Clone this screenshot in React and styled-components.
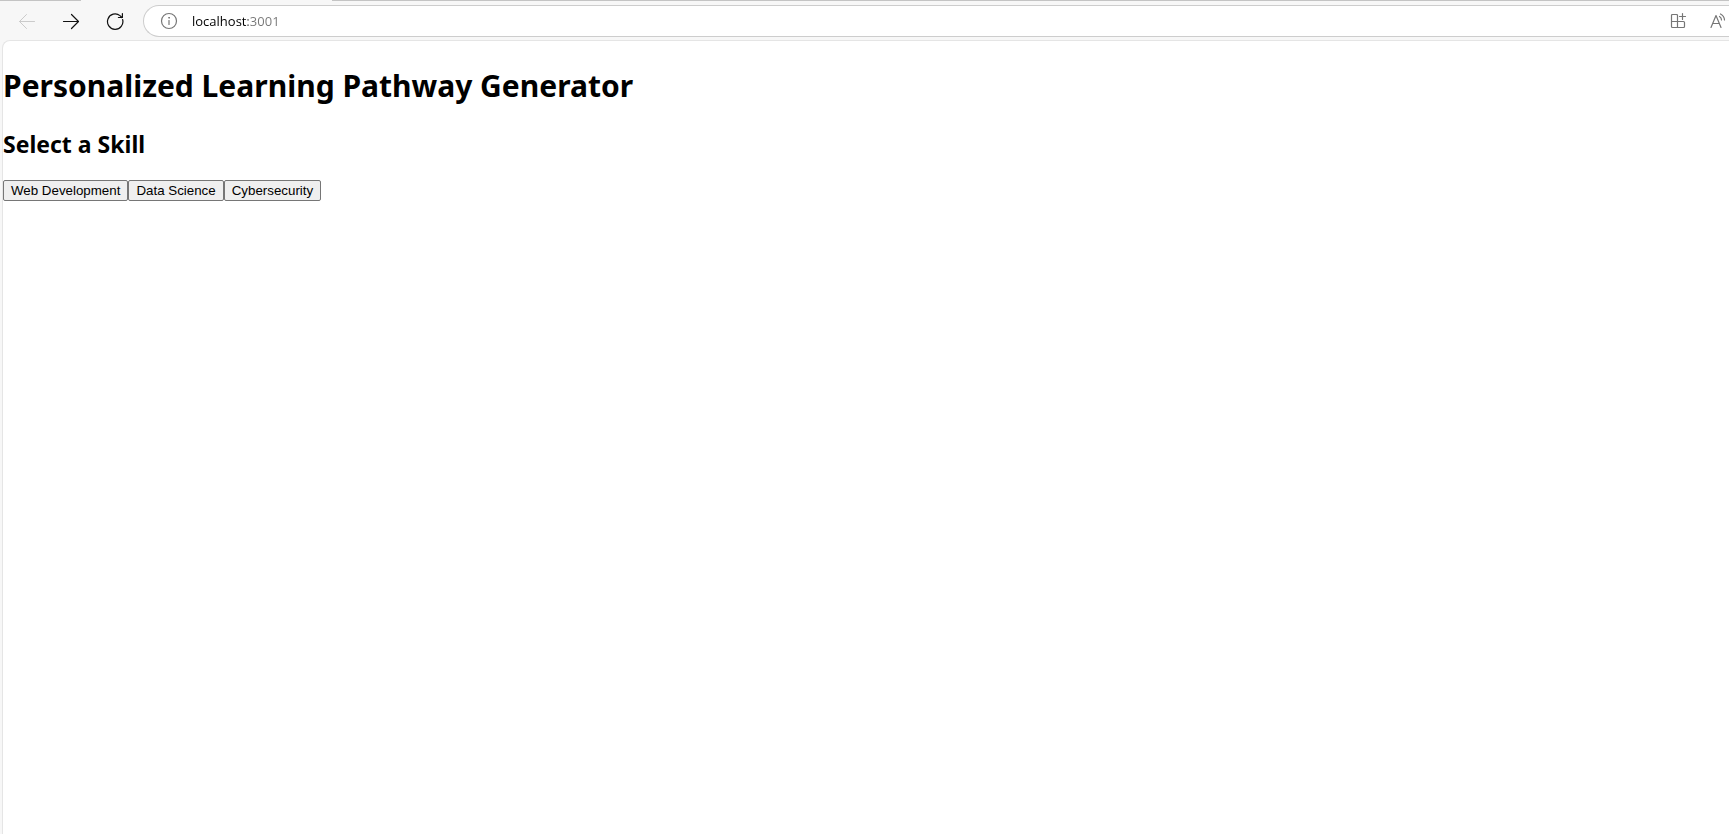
import React, { useState } from 'react';
import styled, { createGlobalStyle } from 'styled-components';

const GlobalStyle = createGlobalStyle`
  * { box-sizing: border-box; }
  body {
    margin: 0;
    background: #f7f7f7;
    color: #000;
    font-family: "Segoe UI", "Noto Sans", "Open Sans", sans-serif;
  }
`;

const Browser = styled.div`
  display: flex;
  flex-direction: column;
  min-height: 100vh;
`;

const TabEdge = styled.div`
  display: grid;
  grid-template-columns: 81px 251px 1fr;
  height: 1px;
`;

const EdgeLine = styled.span`
  background: ${({ $active }) => ($active ? '#f7f7f7' : '#c4c4c4')};
`;

const Toolbar = styled.header`
  display: flex;
  align-items: center;
  height: 39px;
  padding: 0 0 0 5px;
`;

const NavButton = styled.button`
  display: flex;
  align-items: center;
  justify-content: center;
  width: 44px;
  height: 32px;
  padding: 0;
  border: 0;
  background: none;
  color: ${({ disabled }) => (disabled ? '#cbcbcb' : '#111')};
`;

const AddressBar = styled.div`
  display: flex;
  flex: 1;
  align-items: center;
  height: 32px;
  margin-left: 6px;
  padding: 0 2px 0 16px;
  border: 1px solid #cdcdcd;
  border-right: 0;
  border-radius: 16px 0 0 16px;
  background: #fff;
  color: #767676;
`;

const AddressInput = styled.input`
  flex: 1;
  min-width: 0;
  height: 28px;
  margin: 0 16px 0 12px;
  padding: 0 0 0 2px;
  border: 0;
  outline: 0;
  background: linear-gradient(to right, #000 58px, #767676 58px);
  -webkit-background-clip: text;
  background-clip: text;
  color: transparent;
  caret-color: #000;
  font: 13px "Segoe UI", "Open Sans", sans-serif;
`;

const BarButton = styled.button`
  display: flex;
  padding: 0;
  border: 0;
  background: none;
  color: inherit;
  & + & { margin-left: 22px; }
`;

const Page = styled.main`
  flex: 1;
  margin-left: 2px;
  padding: 23px 0 0;
  border: 1px solid #e5e5e5;
  border-width: 1px 0 0 1px;
  border-radius: 8px 0 0 0;
  background: #fff;
`;

const Title = styled.h1`
  margin: 0;
  font-size: 30px;
  line-height: 44px;
`;

const Subtitle = styled.h2`
  margin: 20px 0;
  font-size: 23px;
  line-height: 32px;
`;

const SkillList = styled.div`
  display: flex;
`;

const SkillButton = styled.button`
  height: 21px;
  padding: 0 7px;
  border: 1px solid #767676;
  border-radius: 2px;
  background: #efefef;
  color: #000;
  font-family: "Liberation Sans", Arial, sans-serif;
`;

const Icon = ({ size = 18, children }) => (
  <svg width={size} height={size} viewBox={`0 0 ${size} ${size}`} fill="none" stroke="currentColor"
    strokeLinecap="round" strokeLinejoin="round" aria-hidden="true">{children}</svg>
);

const skills = ['Web Development', 'Data Science', 'Cybersecurity'];

export default function App() {
  const [address, setAddress] = useState('localhost:3001');
  return (
    <>
      <GlobalStyle />
      <Browser>
        <TabEdge><EdgeLine /><EdgeLine $active /><EdgeLine /></TabEdge>
        <Toolbar>
          <NavButton disabled aria-label="Back">
            <Icon><path d="M16.5 9.5H1.5M8.5 2.5l-7 7 7 7" /></Icon>
          </NavButton>
          <NavButton aria-label="Forward">
            <Icon><path strokeWidth="1.2" d="M1.5 9.5h15M9.5 2.5l7 7-7 7" /></Icon>
          </NavButton>
          <NavButton aria-label="Refresh">
            <Icon><path strokeWidth="1.2" d="M16.6 7.5A7.7 7.7 0 1 1 14 3.6L15.8 5.5M16.4 1.5v4h-4" /></Icon>
          </NavButton>
          <AddressBar>
            <BarButton aria-label="Site information">
              <Icon>
                <circle cx="9" cy="9" r="7.5" strokeWidth="1.2" />
                <path strokeWidth="1.2" d="M9 8.5v4" />
                <circle cx="9" cy="5.8" r=".4" fill="currentColor" />
              </Icon>
            </BarButton>
            <AddressInput aria-label="Address" spellCheck={false} value={address}
              onChange={(e) => setAddress(e.target.value)} />
            <BarButton aria-label="Apps">
              <Icon>
                <path strokeWidth="1.2" d="M8.5 9.5v-6q0-1-1-1h-4q-1 0-1 1v11q0 1 1 1h11q1 0 1-1v-4q0-1-1-1h-12M8.5 9.5v6M13.5 1.5v6M10.5 4.5h6" />
              </Icon>
            </BarButton>
            <BarButton aria-label="Read aloud">
              <Icon>
                <path strokeWidth="1.2" d="M2 15.5l5-12 5 12M4 11.5h6M10.5 4.5q2 1.3 2 3.5M11.5 2q3.8 2 4 6" />
              </Icon>
            </BarButton>
          </AddressBar>
        </Toolbar>
        <Page>
          <Title>Personalized Learning Pathway Generator</Title>
          <Subtitle>Select a Skill</Subtitle>
          <SkillList>
            {skills.map((skill) => <SkillButton key={skill}>{skill}</SkillButton>)}
          </SkillList>
        </Page>
      </Browser>
    </>
  );
}
